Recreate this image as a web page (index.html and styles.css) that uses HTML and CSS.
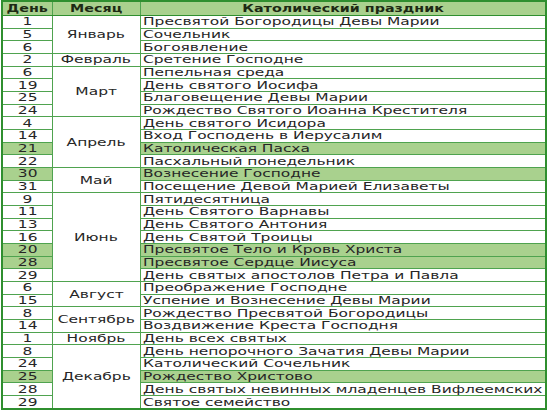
FILE: index.html
```html
<!DOCTYPE html>
<html lang="ru">
<head>
<meta charset="utf-8">
<link rel="stylesheet" href="styles.css">
</head>
<body>
<table class="cal">
<colgroup><col class="c-day"><col class="c-month"><col class="c-name"></colgroup>
<thead>
<tr><th><span class="s">День</span></th><th><span class="s">Месяц</span></th><th><span class="s">Католический праздник</span></th></tr>
</thead>
<tbody>
<tr><td class="d"><span class="s">1</span></td><td class="m" rowspan="3"><span class="s">Январь</span></td><td class="n"><span class="s">Пресвятой Богородицы Девы Марии</span></td></tr>
<tr><td class="d"><span class="s">5</span></td><td class="n"><span class="s">Сочельник</span></td></tr>
<tr><td class="d"><span class="s">6</span></td><td class="n"><span class="s">Богоявление</span></td></tr>
<tr><td class="d"><span class="s">2</span></td><td class="m"><span class="s">Февраль</span></td><td class="n"><span class="s">Сретение Господне</span></td></tr>
<tr><td class="d"><span class="s">6</span></td><td class="m" rowspan="4"><span class="s">Март</span></td><td class="n"><span class="s">Пепельная среда</span></td></tr>
<tr><td class="d"><span class="s">19</span></td><td class="n"><span class="s">День святого Иосифа</span></td></tr>
<tr><td class="d"><span class="s">25</span></td><td class="n"><span class="s">Благовещение Девы Марии</span></td></tr>
<tr><td class="d"><span class="s">24</span></td><td class="n"><span class="s">Рождество Святого Иоанна Крестителя</span></td></tr>
<tr><td class="d"><span class="s">4</span></td><td class="m" rowspan="4"><span class="s">Апрель</span></td><td class="n"><span class="s">День святого Исидора</span></td></tr>
<tr><td class="d"><span class="s">14</span></td><td class="n"><span class="s">Вход Господень в Иерусалим</span></td></tr>
<tr class="hl"><td class="d"><span class="s">21</span></td><td class="n"><span class="s">Католическая Пасха</span></td></tr>
<tr><td class="d"><span class="s">22</span></td><td class="n"><span class="s">Пасхальный понедельник</span></td></tr>
<tr class="hl"><td class="d"><span class="s">30</span></td><td class="m" rowspan="2"><span class="s">Май</span></td><td class="n"><span class="s">Вознесение Господне</span></td></tr>
<tr><td class="d"><span class="s">31</span></td><td class="n"><span class="s">Посещение Девой Марией Елизаветы</span></td></tr>
<tr><td class="d"><span class="s">9</span></td><td class="m" rowspan="7"><span class="s">Июнь</span></td><td class="n"><span class="s">Пятидесятница</span></td></tr>
<tr><td class="d"><span class="s">11</span></td><td class="n"><span class="s">День Святого Варнавы</span></td></tr>
<tr><td class="d"><span class="s">13</span></td><td class="n"><span class="s">День Святого Антония</span></td></tr>
<tr><td class="d"><span class="s">16</span></td><td class="n"><span class="s">День Святой Троицы</span></td></tr>
<tr class="hl"><td class="d"><span class="s">20</span></td><td class="n"><span class="s">Пресвятое Тело и Кровь Христа</span></td></tr>
<tr class="hl"><td class="d"><span class="s">28</span></td><td class="n"><span class="s">Пресвятое Сердце Иисуса</span></td></tr>
<tr><td class="d"><span class="s">29</span></td><td class="n"><span class="s">День святых апостолов Петра и Павла</span></td></tr>
<tr><td class="d"><span class="s">6</span></td><td class="m" rowspan="2"><span class="s">Август</span></td><td class="n"><span class="s">Преображение Господне</span></td></tr>
<tr><td class="d"><span class="s">15</span></td><td class="n"><span class="s">Успение и Вознесение Девы Марии</span></td></tr>
<tr><td class="d"><span class="s">8</span></td><td class="m" rowspan="2"><span class="s">Сентябрь</span></td><td class="n"><span class="s">Рождество Пресвятой Богородицы</span></td></tr>
<tr><td class="d"><span class="s">14</span></td><td class="n"><span class="s">Воздвижение Креста Господня</span></td></tr>
<tr><td class="d"><span class="s">1</span></td><td class="m"><span class="s">Ноябрь</span></td><td class="n"><span class="s">День всех святых</span></td></tr>
<tr><td class="d"><span class="s">8</span></td><td class="m" rowspan="6"><span class="s">Декабрь</span></td><td class="n"><span class="s">День непорочного Зачатия Девы Марии</span></td></tr>
<tr><td class="d"><span class="s">24</span></td><td class="n"><span class="s">Католический Сочельник</span></td></tr>
<tr class="hl"><td class="d"><span class="s">25</span></td><td class="n"><span class="s">Рождество Христово</span></td></tr>
<tr><td class="d"><span class="s">28</span></td><td class="n"><span class="s">День святых невинных младенцев Вифлеемских</span></td></tr>
<tr><td class="d"><span class="s">29</span></td><td class="n"><span class="s">Святое семейство</span></td></tr>
</tbody>
</table>
</body>
</html>
```
FILE: styles.css
```css
html, body {
  margin: 0;
  padding: 0;
  background: #ffffff;
}
body {
  padding: 0 1px 0 1px;
}
.cal {
  border-collapse: collapse;
  width: 546px;
  height: 410px;
  table-layout: fixed;
  font-family: "DejaVu Sans", Verdana, sans-serif;
  font-size: 10.5px;
  color: #262626;
  border: 2px solid #2f8f2f;
}
.c-day { width: 50px; }
.c-month { width: 88px; }
.c-name { width: auto; }
.cal th, .cal td {
  border: 1px solid #4fa34f;
  padding: 0;
  white-space: nowrap;
  overflow: hidden;
  line-height: 11px;
}
.cal th {
  height: 13px;
  background: #a9d18e;
  font-weight: bold;
  color: #1d2a14;
  text-align: center;
  border-bottom: 1px solid #2f8f2f;
}
.cal th .s {
  transform: scaleX(1.36);
}
.cal td {
  height: 11px;
}
.s {
  display: inline-block;
  transform: scaleX(1.47);
  transform-origin: center center;
}
.d, .m {
  text-align: center;
}
.n {
  text-align: left;
  padding-left: 2px !important;
}
.n .s {
  transform-origin: left center;
}
.hl .d, .hl .n {
  background: #a9d18e;
}
```
